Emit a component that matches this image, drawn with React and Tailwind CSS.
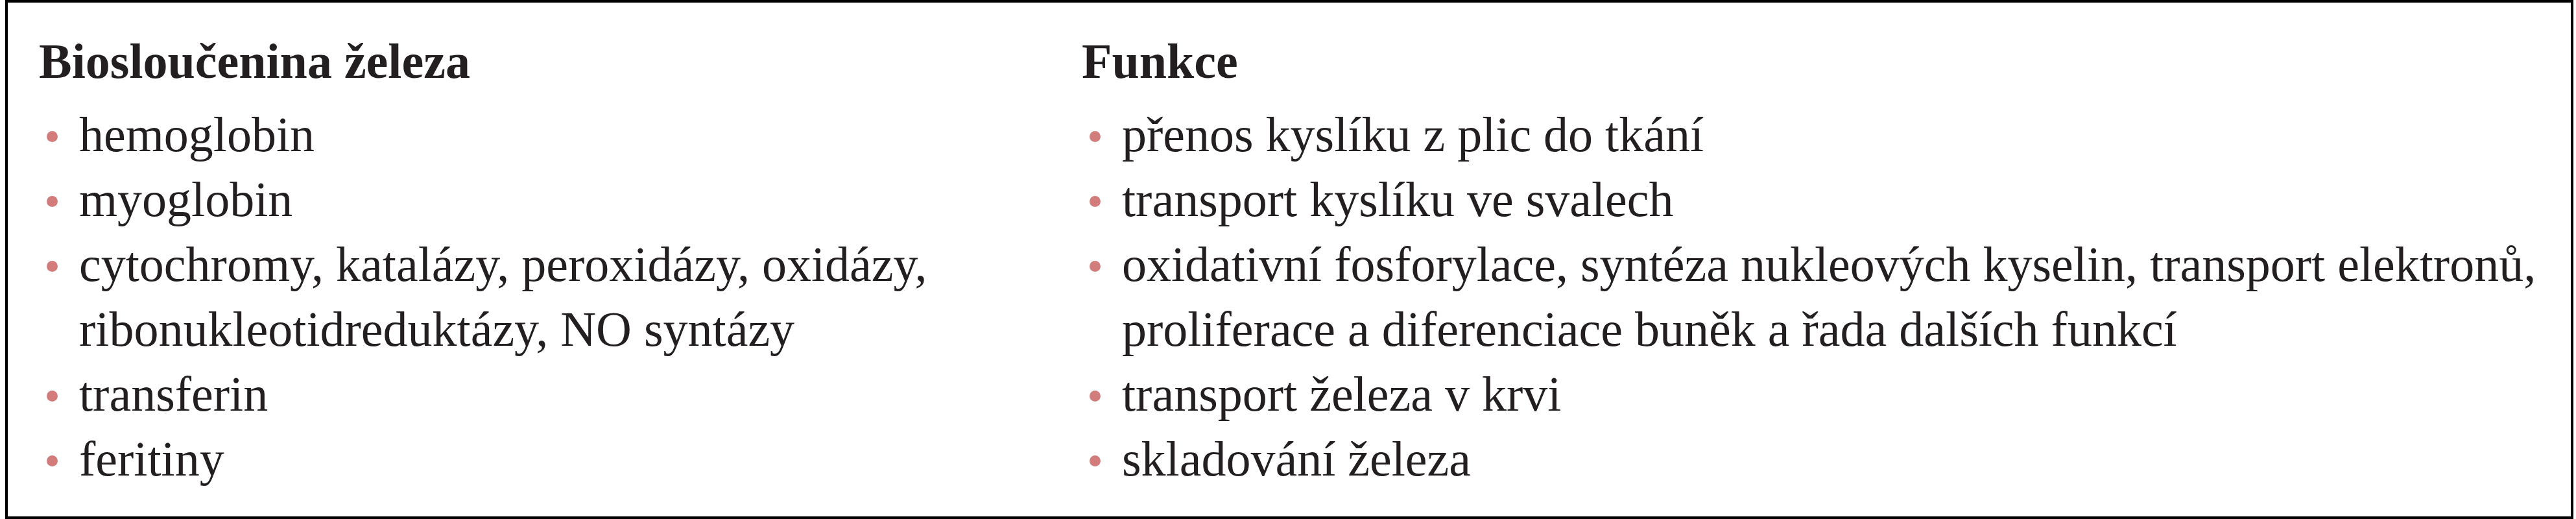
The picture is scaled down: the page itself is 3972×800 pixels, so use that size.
import React from "react";

const left = [
  ["hemoglobin"],
  ["myoglobin"],
  ["cytochromy, katalázy, peroxidázy, oxidázy,", "ribonukleotidreduktázy, NO syntázy"],
  ["transferin"],
  ["feritiny"],
];

const right = [
  ["přenos kyslíku z plic do tkání"],
  ["transport kyslíku ve svalech"],
  [
    "oxidativní fosforylace, syntéza nukleových kyselin, transport elektronů,",
    "proliferace a diferenciace buněk a řada dalších funkcí",
  ],
  ["transport železa v krvi"],
  ["skladování železa"],
];

const Column = ({ title, items }) => {
  return (
    <div className="flex flex-col">
      <div className="font-bold leading-[100px] whitespace-nowrap">{title}</div>
      <ul className="flex flex-col mt-[13px]">
        {items.map((lines, i) => (
          <li key={i} className="flex">
            <div className="w-[62px] shrink-0 pt-[45px] pl-[12px]">
              <div className="w-[17px] h-[17px] rounded-full bg-[#d27c7c]" />
            </div>
            <div className="flex flex-col">
              {lines.map((l, j) => (
                <span key={j} className="leading-[100px] whitespace-nowrap">
                  {l}
                </span>
              ))}
            </div>
          </li>
        ))}
      </ul>
    </div>
  );
};

export default function App() {
  return (
    <div className="w-[3972px] h-[800px] bg-white pl-[8px]">
      <div
        className="w-[3960px] h-[800px] border-4 border-black pt-[40px] pl-[48px] text-[76px] text-[#231f20]"
        style={{ fontFamily: '"Liberation Serif", "Times New Roman", serif' }}
      >
        <div className="grid grid-cols-[1608px_1fr]">
          <Column title="Biosloučenina železa" items={left} />
          <Column title="Funkce" items={right} />
        </div>
      </div>
    </div>
  );
}
